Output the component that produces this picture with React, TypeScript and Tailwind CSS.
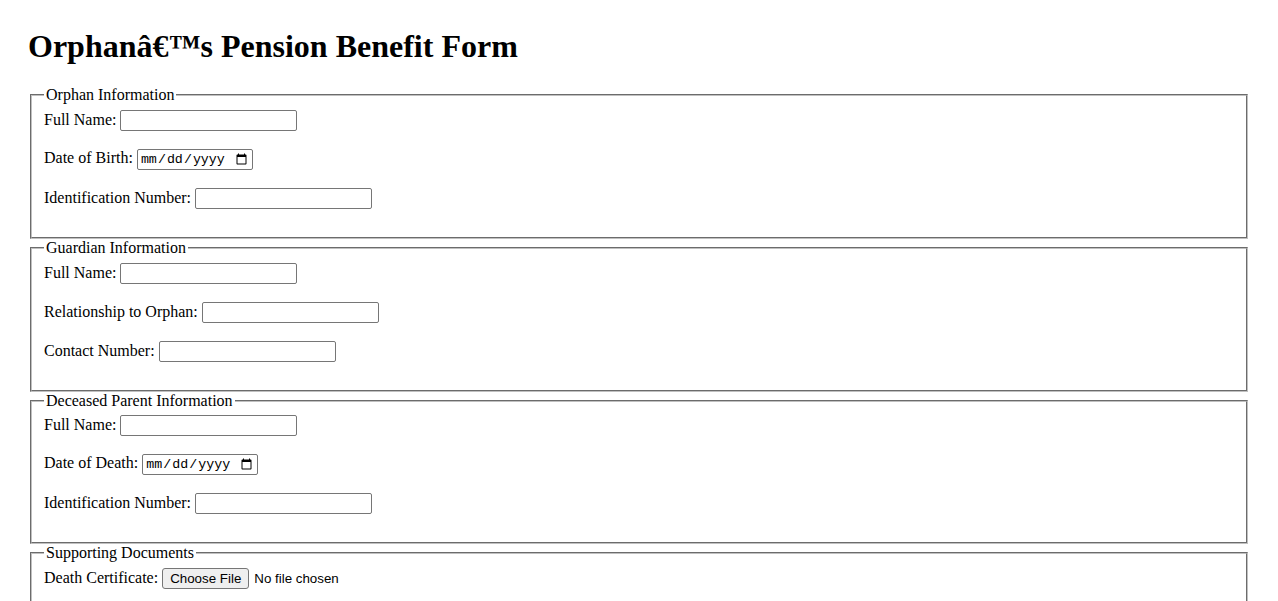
import React from "react";

const serif = { fontFamily: '"Liberation Serif", "Times New Roman", serif' };

const textInput =
  "w-[177px] h-[21px] border border-[#767676] rounded-[2px] bg-white px-[2px] py-[1px] text-[13.33px] leading-[normal] [font-family:'Liberation_Sans',Arial,sans-serif]";
const dateInput =
  "w-[116px] h-[21px] border border-[#767676] rounded-[2px] bg-white px-[2px] py-[1px] text-[13.33px] leading-[normal] [font-family:'Liberation_Mono',monospace]";

function Row({ label, type = "text" }: { label: string; type?: string }) {
  return (
    <>
      <label>{label} </label>
      {type === "date" ? (
        <input type="date" className={dateInput} />
      ) : type === "file" ? (
        <input
          type="file"
          className="text-[13.33px] leading-[normal] [font-family:'Liberation_Sans',Arial,sans-serif] file:border file:border-[#767676] file:bg-[#efefef] file:rounded-[3px] file:px-[7px] file:py-[2px] file:mr-[5px] file:text-[13.33px] file:[font-family:'Liberation_Sans',Arial,sans-serif]"
        />
      ) : (
        <input type="text" className={textInput} />
      )}
      <br />
      <br />
    </>
  );
}

function Group({ legend, children }: { legend: string; children: React.ReactNode }) {
  return (
    <fieldset className="mx-[2px] border-2 [border-style:groove] border-[#c0c0c0] px-[12px] pt-[0.35em] pb-[10px] min-w-0">
      <legend className="px-[2px]">{legend}</legend>
      {children}
    </fieldset>
  );
}

export default function App() {
  return (
    <div className="bg-white text-black text-[16px] leading-[normal] p-[28px]" style={serif}>
      <h1 className="text-[32px] font-bold mb-[21.44px]">Orphanâ€™s Pension Benefit Form</h1>
      <form>
        <Group legend="Orphan Information">
          <Row label="Full Name:" />
          <Row label="Date of Birth:" type="date" />
          <Row label="Identification Number:" />
        </Group>
        <Group legend="Guardian Information">
          <Row label="Full Name:" />
          <Row label="Relationship to Orphan:" />
          <Row label="Contact Number:" />
        </Group>
        <Group legend="Deceased Parent Information">
          <Row label="Full Name:" />
          <Row label="Date of Death:" type="date" />
          <Row label="Identification Number:" />
        </Group>
        <Group legend="Supporting Documents">
          <Row label="Death Certificate:" type="file" />
          <Row label="Birth Certificate:" type="file" />
          <Row label="Guardianship Proof:" type="file" />
        </Group>
      </form>
    </div>
  );
}
